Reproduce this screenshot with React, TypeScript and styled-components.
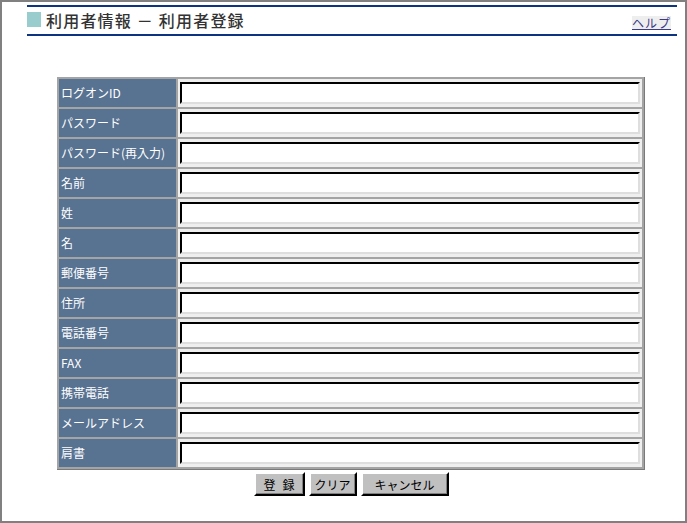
import React from "react";
import styled, { createGlobalStyle } from "styled-components";

const GlobalStyle = createGlobalStyle`
  html, body { margin: 0; padding: 0; background: #ffffff; }
  body { font-family: "Noto Sans CJK JP", "Noto Sans", sans-serif; }
  * { box-sizing: border-box; }
`;

const Frame = styled.div`
  width: 687px;
  height: 523px;
  border: 2px solid #808080;
  background: #ffffff;
  padding: 3px 8px 0 25px;
`;

const Header = styled.div`
  border-top: 2px solid #0d3480;
  border-bottom: 2px solid #0d3480;
  height: 31px;
  display: flex;
  align-items: center;
  justify-content: space-between;
`;

const TitleWrap = styled.div`
  display: flex;
  align-items: center;
  gap: 5px;
  margin-top: -2px;
`;

const Square = styled.span`
  display: block;
  width: 14px;
  height: 15px;
  background: #99cccc;
`;

const Title = styled.h1`
  margin: 0;
  font-size: 16px;
  font-weight: 500;
  color: #333333;
  line-height: 18px;
  letter-spacing: 1.2px;
`;

const HelpLink = styled.a`
  font-size: 12px;
  line-height: 13px;
  color: #3a3a86;
  background: #eeeeee;
  text-decoration: underline;
  margin-top: 3px;
  margin-right: 6px;
  letter-spacing: 1px;
`;

const Form = styled.form`
  margin: 41px 0 0 30px;
  width: 588px;
`;

const Table = styled.table`
  border-collapse: separate;
  border-spacing: 2px;
  background: #a4a4a4;
  border-right: 1px solid #7a7a7a;
  border-bottom: 1px solid #7a7a7a;
  width: 588px;
  margin: 0;
`;

const LabelCell = styled.th`
  width: 118px;
  height: 28px;
  padding: 0 0 1px 2px;
  background: #587291;
  color: #ffffff;
  font-size: 12px;
  font-weight: 400;
  text-align: left;
  white-space: nowrap;
`;

const FieldCell = styled.td`
  height: 28px;
  padding: 3px 2px 3px 2px;
  background: #efefef;
`;

const TextInput = styled.input`
  display: block;
  width: 460px;
  height: 22px;
  margin: 0;
  border: 2px solid;
  border-color: #000000 #dedede #dedede #000000;
  background: #ffffff;
  font-size: 12px;
  padding: 0 3px;
  outline: none;
`;

const Buttons = styled.div`
  display: flex;
  justify-content: center;
  gap: 4px;
  margin-top: 2px;
`;

const Button = styled.button<{ $spaced?: boolean; $w: number }>`
  width: ${(p) => p.$w}px;
  height: 24px;
  padding: 0;
  background: #c0c0c0;
  border: 2px solid;
  border-color: #ffffff #000000 #000000 #ffffff;
  box-shadow: inset -1px -1px 0 #808080;
  font-family: "Noto Sans CJK JP", sans-serif;
  font-size: 12px;
  color: #000000;
  letter-spacing: ${(p) => (p.$spaced ? "7px" : "0")};
  text-indent: ${(p) => (p.$spaced ? "7px" : "0")};
  cursor: pointer;
`;

const fields = [
  "ログオンID",
  "パスワード",
  "パスワード(再入力)",
  "名前",
  "姓",
  "名",
  "郵便番号",
  "住所",
  "電話番号",
  "FAX",
  "携帯電話",
  "メールアドレス",
  "肩書",
];

export default function App() {
  return (
    <>
      <GlobalStyle />
      <Frame>
        <Header>
          <TitleWrap>
            <Square />
            <Title>利用者情報 － 利用者登録</Title>
          </TitleWrap>
          <HelpLink href="#">ヘルプ</HelpLink>
        </Header>
        <Form onSubmit={(e) => e.preventDefault()}>
          <Table>
            <tbody>
              {fields.map((f) => (
                <tr key={f}>
                  <LabelCell>{f}</LabelCell>
                  <FieldCell>
                    <TextInput
                      type={f.startsWith("パスワード") ? "password" : "text"}
                    />
                  </FieldCell>
                </tr>
              ))}
            </tbody>
          </Table>
          <Buttons>
            <Button type="submit" $w={51} $spaced>登録</Button>
            <Button type="reset" $w={48}>クリア</Button>
            <Button type="button" $w={88}>キャンセル</Button>
          </Buttons>
        </Form>
      </Frame>
    </>
  );
}
